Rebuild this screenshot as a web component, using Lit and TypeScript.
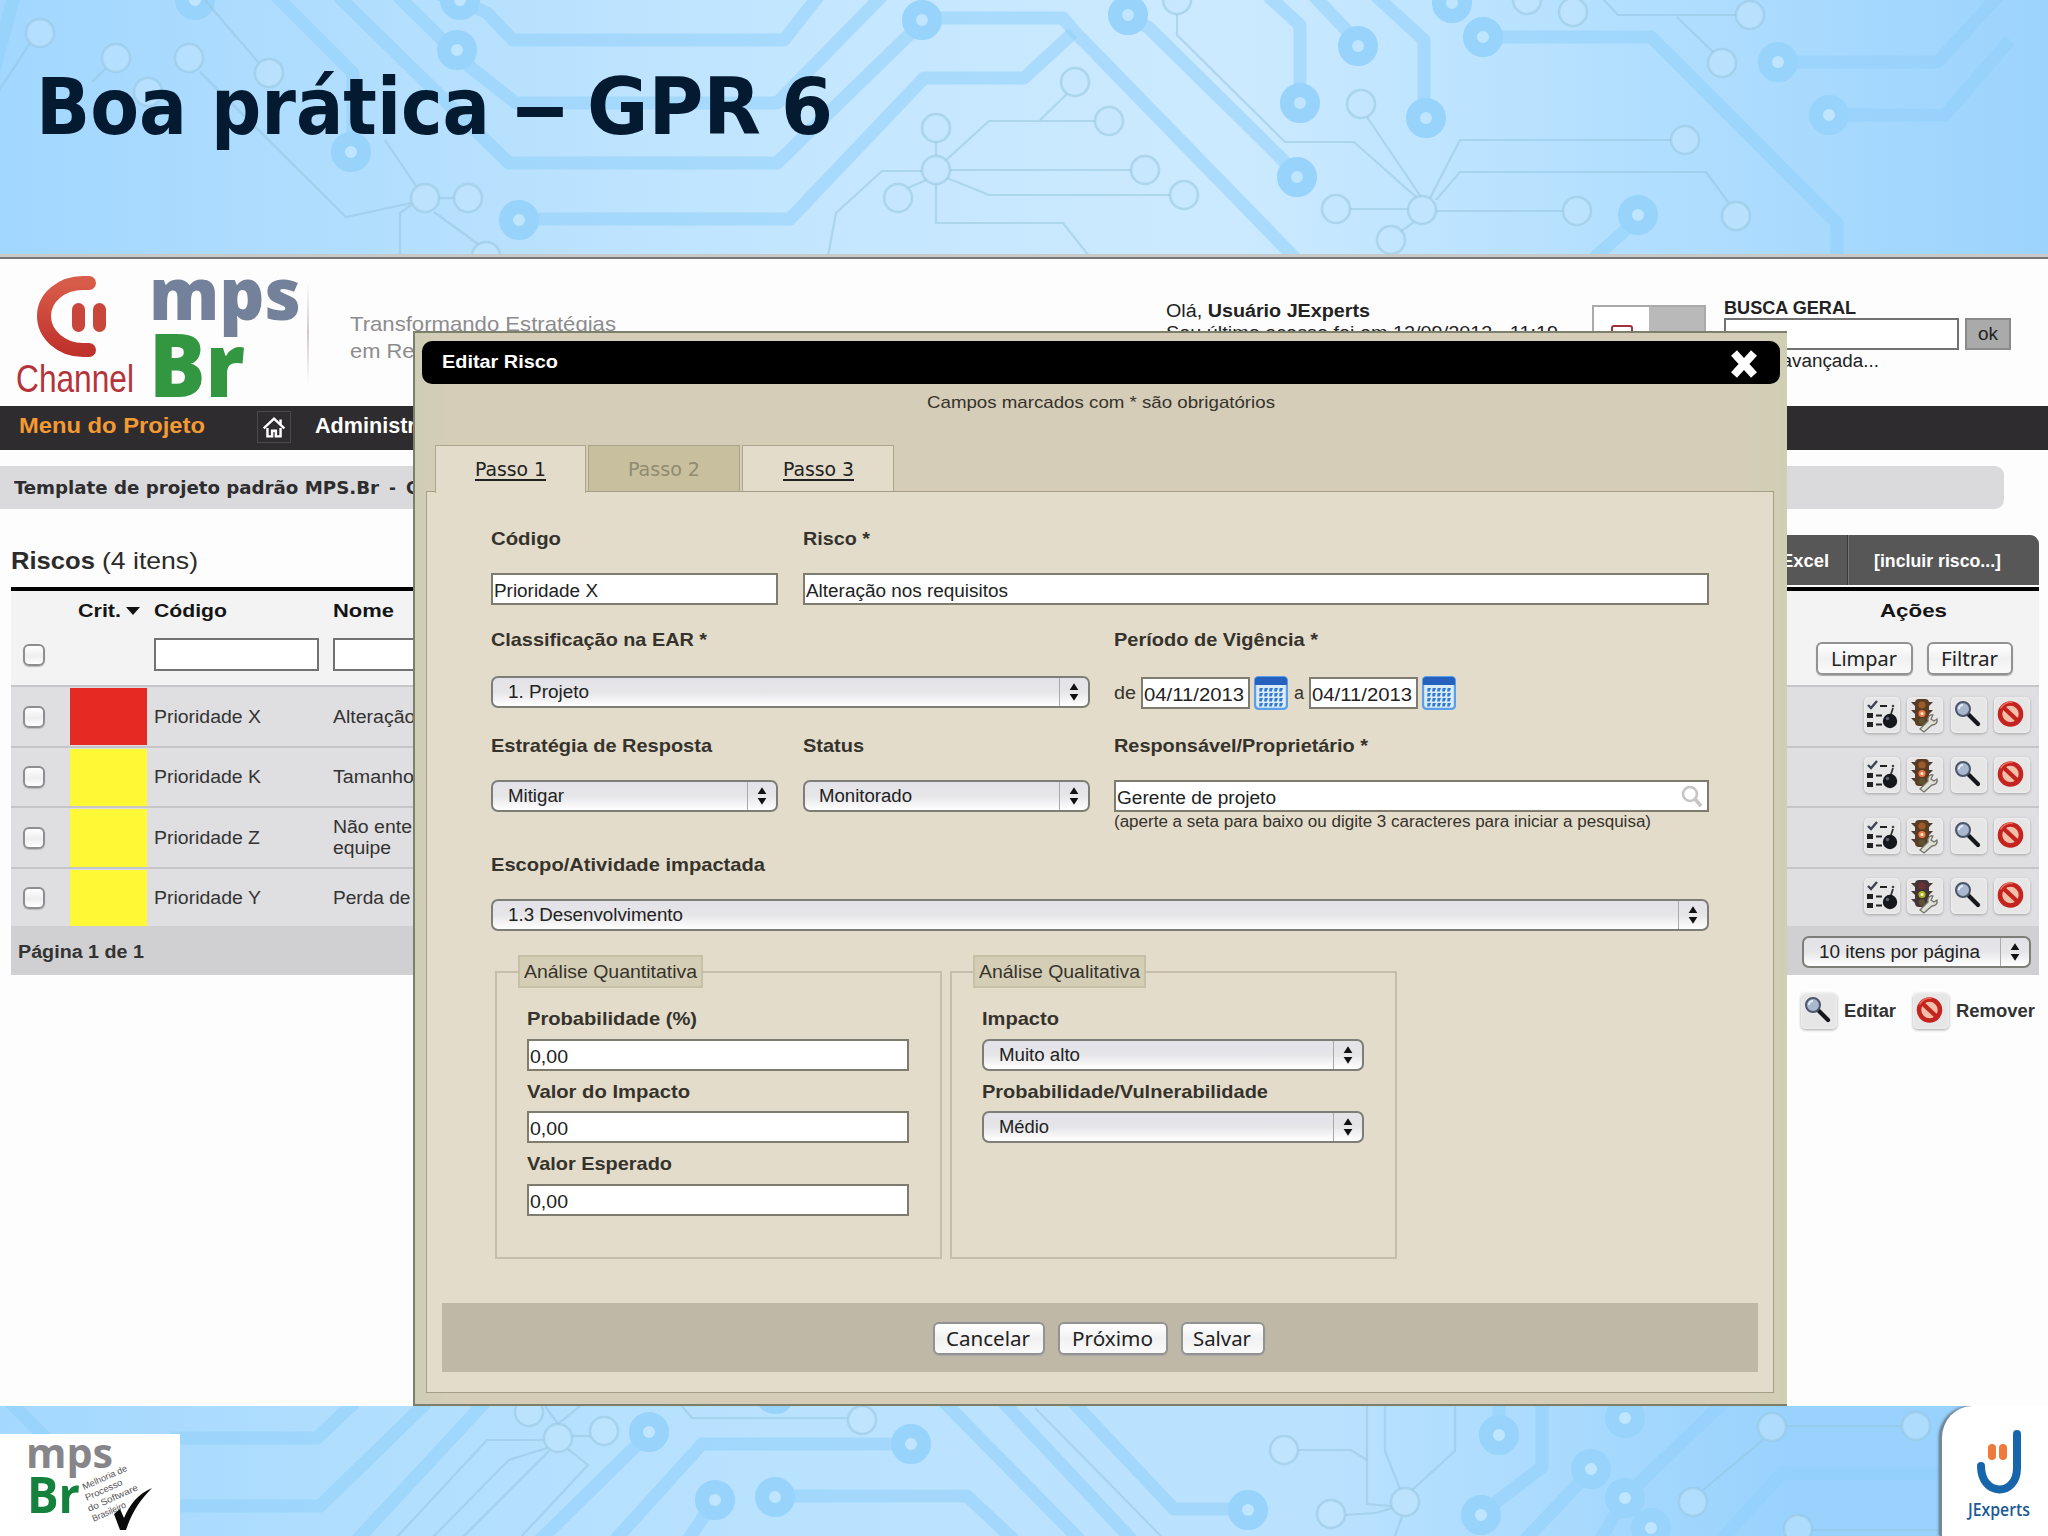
import { LitElement, html, css, svg, nothing } from "lit";
import { customElement } from "lit/decorators.js";

type Pt = [number, number];

// Circuit board decoration: wide traces, wide pads, thin traces, thin pads.
const TOP_WIDE = [
  "M438 -6L460 0L487 13L513 40H784L820 -6", "M398 -4L470 67L516 103H777L882 -4", "M338 -4L509 163H777L911 33",
  "M276 -4L353 73V140", "M934 18H1063L1073 30L1295 258", "M535 219H790L924 78H1024L1073 33", "M-6 70L14 -4",
  "M1140 24L1148 27L1288 165", "M1268 -4L1300 25V92", "M1314 -4L1352 36", "M1376 -4L1424 40V105",
  "M1495 37H1651L1837 223V258", "M1790 62H1938L1998 -4", "M1841 115H1945L2010 40", "M1630 226L1594 258",
];
const TOP_PADS: Pt[] = [[457, 50], [460, 0], [922, 20], [351, 152], [519, 220], [1128, 15], [1297, 177], [1300, 103], [1358, 46], [1426, 118], [1452, 3], [1483, 37], [1778, 62], [1829, 115], [1638, 215], [195, 0]];
const TOP_THIN = [
  "M203 -2L258 62", "M200 72L346 217L411 203", "M385 140L416 186", "M411 205L400 213V256", "M434 212L478 244", "M439 198H454",
  "M936 142V156M926 180L908 188", "M946 160L989 121H1095", "M1067 94L1040 120", "M950 170H1131", "M947 178L989 195H1170",
  "M936 184V223H1063L1089 256", "M922 171H882L836 213L828 256", "M1177 14V35L1285 142H1354L1416 197", "M1367 117L1421 197",
  "M1350 209H1408M1436 211H1563", "M1430 198L1460 140H1671", "M1436 200L1460 172H1706L1729 203", "M1414 222L1400 232",
  "M1736 15H1618L1602 -2", "M1677 17L1713 52", "M106 68L92 82M30 43L-2 92",
];
const TOP_RINGS: Pt[] = [[40, 33], [116, 58], [189, 58], [269, 73], [425, 198], [468, 198], [486, 256], [936, 128], [936, 170], [898, 198], [1109, 121], [1075, 82], [1145, 170], [1184, 195], [1177, 0], [1361, 104], [1422, 210], [1336, 209], [1577, 211], [1685, 140], [1736, 216], [1391, 240], [1750, 15], [1722, 63], [1527, 0], [1573, 12], [148, 92]];
const BOT_WIDE = [
  "M10 -4L48 34", "M170 32H317L355 -4", "M170 100H320L427 -4", "M485 -4L357 134", "M640 36L540 134", "M899 38H702L615 134",
  "M708 104L688 134", "M787 90H967L1014 134", "M944 -4L1080 134", "M1003 -4L1132 134", "M1073 -4L1174 103H1236", "M1499 -4V18",
  "M1542 -4V61L1490 101", "M1583 73L1525 134", "M1724 -4L1634 82", "M1940 67H1782L1721 134", "M1619 102L1600 134",
];
const BOT_PADS: Pt[] = [[649, 26], [911, 38], [715, 94], [775, 91], [1248, 104], [1499, 29], [1481, 109], [1591, 63], [1625, 12], [1625, 92], [1651, 122], [775, -12]];
const BOT_THIN = [
  "M543 34H487L396 132", "M547 42L509 54L432 132", "M549 45L462 132", "M568 43L588 59L520 132", "M572 30H590", "M680 -2L692 12H848",
  "M1035 2L1163 132", "M1298 44H1351L1367 54V98L1391 100", "M1367 -2V54", "M1385 -2V45L1400 83", "M1455 -2V45L1412 84", "M1345 109L1376 107L1392 102",
  "M1402 111L1394 132", "M1786 20H1902", "M1764 33L1703 84", "M1812 124H1938", "M545 0L558 18L580 0",
];
const BOT_RINGS: Pt[] = [[558, 32], [604, 25], [529, 6], [862, 14], [1284, 44], [1405, 96], [1331, 108], [1772, 21], [1916, 20], [1693, 96], [1798, 123]];

const circuit = (w: string[], p: Pt[], t: string[], r: Pt[], h: number) => html`
  <svg class="circuit" width="2048" height=${h} viewBox="0 0 2048 ${h}">
    <g fill="none" stroke="#8fd0fa" stroke-opacity=".55" stroke-width="13" stroke-linejoin="round">${w.map((d) => svg`<path d=${d} />`)}</g>
    ${p.map(([x, y]) => svg`<circle cx=${x} cy=${y} r="13" fill="#bfe5ff" stroke="#98d3fb" stroke-width="14" />`)}
    <g fill="none" stroke="#93c3dc" stroke-opacity=".5" stroke-width="2.2">${t.map((d) => svg`<path d=${d} />`)}</g>
    ${r.map(([x, y]) => svg`<circle cx=${x} cy=${y} r="14" fill="#c3e6fd" fill-opacity=".5" stroke="#98c6de" stroke-opacity=".55" stroke-width="2.6" />`)}
  </svg>`;

const ICONS = {
  tasks: html`<svg class="ic" viewBox="0 0 36 36">
    <path d="M4 8l3 3 6-7" fill="none" stroke="#3d4450" stroke-width="2.4" />
    <path d="M3 16h6v5H3zM3 25h6v5H3z" fill="#222" /><path d="M16 9h7M12 18.5h6M12 27.500h6" stroke="#222" stroke-width="2" />
    <path d="M27 17l2-6" stroke="#333" stroke-width="1.800" /><circle cx="29" cy="9" r="1.300" fill="#444" />
    <circle cx="26" cy="24" r="7.200" fill="#15171b" /><circle cx="23.500" cy="21.500" r="1.800" fill="#59606c" /></svg>`,
  light: (amber: boolean) => html`<svg class="ic" viewBox="0 0 36 36">
    <path d="M4 5h5v5zM4 13h5v5zM4 21h5v5zM26 5h-5v5zM26 13h-5v5z" fill="#4a3a30" />
    <rect x="8" y="2" width="14" height="27" rx="4" fill=${amber ? "#5a3c22" : "#43333a"} />
    <circle cx="15" cy="8" r="3.600" fill=${amber ? "#9a5c2c" : "#6d2f36"} />
    <circle cx="15" cy="16.500" r="3.600" fill=${amber ? "#f0784c" : "#a6b41c"} /><circle cx="15" cy="16.500" r="1.500" fill="#fff2c4" />
    <circle cx="15" cy="24.500" r="3.200" fill="#5c5430" />
    <path d="M13 32l8-8c-1-4 2-7 5-6l-2 4 3 2 3-2c1 4-2 6-5 6l-8 7z" fill="#dfe0d6" stroke="#73736a" stroke-width="1.300" /></svg>`,
  lens: html`<svg class="ic" viewBox="0 0 36 36">
    <path d="M17 17l10 10" stroke="#15171c" stroke-width="4.200" stroke-linecap="round" />
    <circle cx="12" cy="12" r="7" fill="#a9b7cf" stroke="#4c566a" stroke-width="2" /><path d="M8 12a4 4 0 0 1 4-4" fill="none" stroke="#e6edf8" stroke-width="2" /></svg>`,
  deny: html`<svg class="ic" viewBox="0 0 36 36">
    <circle cx="16.500" cy="17" r="10.500" fill="#f0c0a8" stroke="#c4231f" stroke-width="4.600" /><path d="M9.500 10.500l14 13" stroke="#c4231f" stroke-width="4.400" />
    <path d="M6.500 11.500a11 11 0 0 1 12-6" fill="none" stroke="#ea6a5c" stroke-width="1.600" /></svg>`,
};

const calendar = html`<svg class="cal" width="34" height="34" viewBox="0 0 34 34">
  <rect x="1" y="1" width="32" height="32" rx="4" fill="#d9ecfc" stroke="#5c9fe8" stroke-width="2.4" />
  <path d="M1 9V4a3 3 0 0 1 3-3h26a3 3 0 0 1 3 3v5z" fill="#2561bd" />
  ${[12, 17, 22, 27].map((y) => [5, 10, 15, 20, 25].map((x) => svg`<path d="M${x + 0.6} ${y}h3.400l-1.300 3.400h-2.600z" fill="#3478d0" />`))}</svg>`;

const t = (text: string, w: number, cls = "") => html`<span class="t ${cls}" data-w=${w}>${text}</span>`;

const ROWS = [
  { code: "Prioridade X", w: 107, name: ["Alteração nos requisitos"], nw: [208], red: true, h: 61 },
  { code: "Prioridade K", w: 107, name: ["Tamanho do projeto"], nw: [174], h: 60 },
  { code: "Prioridade Z", w: 106, name: ["Não entendimento da", "equipe"], nw: [186, 58], h: 61 },
  { code: "Prioridade Y", w: 107, name: ["Perda de recursos"], nw: [156], last: true, h: 59 },
];

@customElement("app-root")
export class AppRoot extends LitElement {
  static styles = css`
    :host { display: block; position: relative; width: 2048px; height: 1536px; overflow: hidden; background: #fdfdfd; color: #2b2b2b; font: 18px/24px "Liberation Sans", Arial, sans-serif; }
    * { box-sizing: border-box; }
    .t { display: inline-block; white-space: pre; transform-origin: 0 50%; flex: none; }
    .b, b { font-weight: 700; }
    svg { display: block; flex: none; }
    .banner { position: relative; height: 259px; background: linear-gradient(90deg, #a2d7ff, #b4dffe 20%, #c3e6ff 38%, #cceaff 60%, #b4e0ff 78%, #9cd3fd); border-bottom: 2px solid #77777a; padding: 67px 0 0 36px; overflow: hidden; }
    .circuit { position: absolute; left: 0; top: 0; }
    .banner::after { content: ""; position: absolute; left: 0; right: 0; bottom: 0; height: 3px; background: #c9c9c7; }
    .title { position: relative; margin: 0; font: 700 79px/80px "DejaVu Sans Condensed", "DejaVu Sans", sans-serif; font-stretch: condensed; color: #041a30; display: grid; grid-template-columns: 175px 300px 76px 194px 60px; justify-items: start; }
    .head { height: 147px; display: flex; }
    .brand { width: 140px; padding: 13px 0 0 14px; }
    .channel { font: 39px/40px "Liberation Sans", sans-serif; color: #b5343a; margin-top: -5px; margin-left: 2px; }
    .mps { width: 167px; padding-left: 9px; font-family: "Open Sans", sans-serif; font-weight: 800; }
    .mps .m { display: block; font-size: 73px; line-height: 80px; color: #74819a; margin-top: -7px; }
    .mps .r { display: block; font-size: 88px; line-height: 80px; color: #339640; margin-top: -9px; }
    .rule { width: 2px; height: 106px; margin-top: 21px; background: linear-gradient(#fff, #d4c8cc, #fff); }
    .tag { width: 817px; padding: 51px 0 0 41px; font-size: 21px; line-height: 27px; color: #8c8c8e; }
    .tag .t { display: block; width: max-content; }
    .user { width: 466px; padding: 41px 0 0 40px; line-height: 22px; color: #222; }
    .user .t { display: block; width: max-content; }
    .cards { width: 114px; height: 60px; margin: 46px 1px 0 0; border: 2px solid #aaa; display: flex; }
    .cards i { flex: 1; background: #fff; }
    .cards i + i { background: #b9b9b9; }
    .pdf { width: 22px; height: 18px; margin: 18px auto; border: 2px solid #a03038; border-radius: 3px; }
    .search { padding: 37px 0 0 17px; color: #222; }
    .search .line { display: flex; gap: 6px; height: 32px; margin: -2px 0 -1px; }
    .box { border: 2px solid #727272; background: #fff; }
    .ok { width: 46px; background: #aaa; border: 2px solid #8a8a8a; text-align: center; line-height: 28px; }
    .nav { height: 44px; background: #2e2c2e; display: flex; align-items: center; color: #fff; font: 700 22px/38px "Liberation Sans", sans-serif; padding: 0 0 5px 19px; }
    .nav .o { color: #f49a33; width: 238px; }
    .home { width: 34px; height: 32px; border: 1px solid #4b494b; margin-right: 24px; margin-top: 3px; }
    .crumb { margin-top: 16px; height: 43px; width: 2004px; background: #dad9db; border-radius: 0 9px 9px 0; padding-left: 14px; font: 700 18.500px/44px "DejaVu Sans Condensed", "DejaVu Sans", sans-serif; font-stretch: condensed; color: #2d2d2f; display: flex; gap: 10px; }
    .bar { margin: 26px 9px 0 11px; height: 52px; display: flex; align-items: flex-start; font-size: 24px; line-height: 51px; }
    .bar .grow { flex: 1; }
    .tools { width: 339px; height: 50px; background: #575757; border-radius: 0 9px 0 0; color: #fff; display: flex; font: 700 18px/52px "Liberation Sans", sans-serif; }
    .tools .x { width: 148px; text-align: right; padding-right: 18px; border-right: 1px solid #3a3a3a; }
    .tools .y { padding-left: 25px; border-left: 1px solid #747474; }
    .table { margin: 0 9px 0 11px; border-top: 4px solid #000; }
    .grid { display: grid; grid-template-columns: 59px 77px 186px 1fr 279px; }
    .hd { height: 94px; background: #f3f3f4; color: #151515; font-weight: 700; font-size: 19px; grid-template-rows: 47px 1fr; }
    .hd > * { padding-top: 8px; }
    .hd .f { padding-top: 0; }
    .cb { width: 22px; height: 22px; margin-left: 12px; border: 2px solid #8e8e90; border-radius: 6px; background: linear-gradient(#fff, #eee 55%, #fff); box-shadow: 0 1px 1px #bbb; }
    .p7 { padding-left: 7px; } .p8 { padding-left: 8px; }
    .crit { display: flex; gap: 5px; align-items: center; height: 24px; }
    .row { border-top: 2px solid #c6c5c7; background: #dfdee0; align-items: center; color: #333; line-height: 21px; }
    .row .c { align-self: stretch; margin-top: 1px; background: #fff935; }
    .row .c.red { background: #e42a22; margin-bottom: 1px; }
    .row .p7, .row .n { padding-top: 1px; }
    .row .n .t { display: block; width: max-content; }
    .acts { display: flex; gap: 7.500px; justify-content: flex-end; padding: 0 9px 4px 0; }
    .ic { width: 36px; height: 36px; border-radius: 5px; background: #e6e6e6; box-shadow: 0 1px 3px #a4a4a4, inset 0 0 2px #fff; }
    .foot { height: 49px; background: #d0cfd1; display: flex; justify-content: space-between; align-items: center; padding: 2px 8px 0 7px; font-weight: 700; color: #333; }
    .legend { display: flex; align-items: center; justify-content: flex-end; margin: 18px 13px 0 0; color: #333; font-weight: 700; }
    .legend .ic { margin: 0 7px 0 17px; }
    .btn { height: 33px; border: 2px solid #929292; border-radius: 6px; background: linear-gradient(#fff, #f1f1f1 50%, #fafafa); color: #222; text-align: center; font: 19px/31px "Noto Sans", sans-serif; box-shadow: 0 1px 1px #aaa; }
    .btn .t { position: relative; left: -1px; }
    .sel { height: 32px; border: 2px solid #7e7e78; border-radius: 7px; background: linear-gradient(#e2e2e8, #e6e6e9 50%, #fff); display: flex; align-items: center; padding-left: 14.500px; color: #222; font-weight: 400; }
    .sel svg { margin-left: auto; border-left: 1px solid #aaa; }
    .modal { position: absolute; left: 413px; top: 331px; width: 1374px; height: 1075px; background: linear-gradient(90deg, #cfcdb6, #d5cdb8 3%, #d5cdb8 97%, #cfcfb4); border: 2px solid #7c7f6c; border-right: 0; color: #35332b; }
    .mt { margin: 8px 7px 0; height: 43px; background: #000; border-radius: 10px; color: #fff; font-weight: 700; display: flex; align-items: center; justify-content: space-between; padding: 0 20px 2px; }
    .mt svg { position: relative; top: 2px; left: 1px; }
    .req { padding-top: 7px; height: 33px; font-size: 17px; text-align: center; width: 1372px; }
    .tabs { display: flex; margin: 28px 0 0 20px; gap: 2px; height: 46px; position: relative; }
    .tab { width: 152px; height: 46px; border: 1px solid #aca58c; border-bottom: 0; background: #e4dccb; text-align: center; font: 20px/46px "DejaVu Sans Condensed", "DejaVu Sans", sans-serif; font-stretch: condensed; color: #222; }
    .tab .t { text-decoration: underline; text-decoration-thickness: 2px; text-underline-offset: 3px; }
    .tab.on { height: 48px; width: 151px; }
    .tab.off { background: #c7bf9d; color: #918b72; }
    .tab.off .t { text-decoration: none; }
    .panel { margin-left: 11px; width: 1348px; height: 902px; border: 1px solid #a59e86; background: #e4dccb; padding-left: 64px; }
    .row-f { display: grid; grid-template-columns: 287px 287px 595px; column-gap: 24.500px; }
    .s2 { grid-column: span 2; } .s3 { grid-column: span 3; }
    .lb { display: block; height: 24px; font-weight: 700; font-size: 18.500px; }
    .in { height: 32px; border: 2px solid #7d7c6f; background: #fff; padding-left: 1px; line-height: 32px; color: #222; display: flex; justify-content: space-between; }
    .a { padding-top: 35px; } .a .lb { margin-bottom: 22px; }
    .bb { padding-top: 23px; } .bb .lb { margin-bottom: 24px; }
    .cc { padding-top: 24px; } .cc .lb { margin-bottom: 22px; }
    .dd { padding-top: 21px; } .dd .lb { margin-bottom: 22px; }
    .hint { font-size: 16px; line-height: 16px; height: 20px; padding-top: 2px; }
    .dates { display: flex; align-items: center; height: 34px; }
    .dates .in { width: 109px; margin: 0 4px 0 5px; }
    .dates .cal { margin-right: 6px; }
    .sets { display: flex; gap: 8px; margin: 24px 0 0 4px; }
    fieldset { margin: 0; width: 447px; height: 304px; border: 2px solid #c6beaa; padding: 10px 31px 0 30px; min-inline-size: 0; }
    legend { margin-left: -9px; height: 33px; padding: 0 4px; border: 2px solid #c6c0a6; background: #d5ceb6; font-size: 18.500px; line-height: 29px; }
    fieldset .lb { margin: 9px 0 7.600px; line-height: 24px; }
    .cmd { margin: 44px 0 0 -49px; width: 1316px; height: 69px; background: #c0b8a7; display: flex; justify-content: center; align-items: flex-start; gap: 13px; padding: 19px 2px 0 0; }
    .bottom { position: absolute; left: 0; top: 1406px; width: 2048px; height: 130px; background: linear-gradient(90deg, #a4d8ff, #b2dffe 20%, #bbe3ff 45%, #bae2ff 65%, #98d2fd 88%); overflow: hidden; display: flex; justify-content: space-between; }
    .seal { position: relative; width: 180px; height: 102px; margin-top: 28px; background: #fff; }
    .seal svg { overflow: visible; }
    .jx { position: relative; width: 108px; height: 130px; background: #fff; border-left: 2px solid #789; border-radius: 32px 0 0 0; box-shadow: -1px 0 3px #567; }
  `;

  protected firstUpdated() {
    const fits = [...this.renderRoot.querySelectorAll<HTMLElement>("[data-w]")];
    const sizes = fits.map((el) => el.getBoundingClientRect().width);
    fits.forEach((el, i) => {
      const want = Number(el.dataset.w);
      el.style.transform = `scaleX(${(want / sizes[i]).toFixed(4)})`;
      el.style.marginRight = `${(want - sizes[i]).toFixed(2)}px`;
    });
  }

  private select(text: string, w: number) {
    return html`<div class="sel">${t(text, w)}
      <svg width="29" height="28" viewBox="0 0 29 28"><path d="M10 12l4.500-7 4.500 7zM10 16l4.500 7 4.500-7z" fill="#111" /></svg></div>`;
  }

  private page() {
    return html`
      <div class="head">
        <div class="brand">
          <svg width="110" height="92" viewBox="0 0 110 92">
            <defs><linearGradient id="rd" x1="0" y1="0" x2="0" y2="1"><stop offset="0" stop-color="#d85c4a" /><stop offset="1" stop-color="#c0322c" /></linearGradient></defs>
            <path d="M75 11H69C47 11 30 26 30 44S47 78 69 78H75" fill="none" stroke="url(#rd)" stroke-width="14" stroke-linecap="round" />
            <rect x="58" y="31" width="13" height="29" rx="6.500" fill="#c9473a" /><rect x="79" y="31" width="13" height="29" rx="6.500" fill="#c9473a" />
          </svg>
          <div class="channel">${t("Channel", 118)}</div>
        </div>
        <div class="mps"><div class="m">${t("mps", 152)}</div><div class="r">${t("Br", 96)}</div></div>
        <div class="rule"></div>
        <div class="tag">${t("Transformando Estratégias", 266)}${t("em Resultados", 146)}</div>
        <div class="user"><div>${html`<span class="t" data-w="204">Olá, <b>Usuário JExperts</b></span>`}</div>${t("Seu último acesso foi em 12/09/2013 - 11:19", 392)}</div>
        <div class="cards"><i><div class="pdf"></div></i><i></i></div>
        <div class="search">${t("BUSCA GERAL", 132, "b")}
          <div class="line"><div class="box" style="width:235px"></div><div class="ok">${t("ok", 20)}</div></div>
          ${t("Busca avançada...", 155)}</div>
      </div>
      <div class="nav"><div class="o">${t("Menu do Projeto", 186)}</div>
        <svg class="home" viewBox="0 0 34 32"><path d="M6 17.500L17 7l11 10.500M10 17v9h5v-6h4v6h5v-9M24 13V8" fill="none" stroke="#fff" stroke-width="2.600" /></svg>
        ${t("Administração", 150)}</div>
      <div class="crumb">${t("Template de projeto padrão MPS.Br", 365)}<span>-</span><span>Gerenciamento</span></div>
      <div class="bar"><div class="grow">${t("Riscos", 84, "b")}<span class="t"> </span>${t("(4 itens)", 96)}</div>
        <div class="tools"><div class="x">${t("Excel", 48)}</div><div class="y">${t("[incluir risco...]", 127)}</div></div></div>
      <div class="table">
        <div class="grid hd">
          <div></div><div class="p8"><div class="crit">${t("Crit.", 43)}<svg width="14" height="9"><path d="M0 0h14l-7 8z" fill="#111" /></svg></div></div>
          <div class="p7">${t("Código", 73)}</div><div>${t("Nome", 61)}</div>
          <div style="padding-left:120px">${t("Ações", 67)}</div>
          <div class="f" style="padding-top:6px"><div class="cb"></div></div><div></div>
          <div class="f p7"><div class="box" style="width:165px;height:33px"></div></div>
          <div class="f"><div class="box" style="width:165px;height:33px"></div></div>
          <div class="f" style="display:flex;gap:14px;padding:4px 0 0 56px">
            <div class="btn" style="width:97px">${t("Limpar", 66)}</div><div class="btn" style="width:86px">${t("Filtrar", 57)}</div></div>
        </div>
        ${ROWS.map((r) => html`<div class="grid row" style="height:${r.h}px">
          <div class="cb"></div><div class="c ${r.red ? "red" : ""}"></div><div class="p7">${t(r.code, r.w)}</div>
          <div class="n">${r.name.map((s, i) => t(s, r.nw[i]))}</div>
          <div class="acts">${ICONS.tasks}${ICONS.light(!r.last)}${ICONS.lens}${ICONS.deny}</div></div>`)}
        <div class="foot">${t("Página 1 de 1", 126)}<div style="width:229px">${this.select("10 itens por página", 161)}</div></div>
      </div>
      <div class="legend">${ICONS.lens}${t("Editar", 52)}${ICONS.deny}${t("Remover", 79)}</div>`;
  }

  private field(label: string, w: number, body: unknown, cls = "") {
    return html`<div class=${cls}><span class="lb">${t(label, w)}</span>${body}</div>`;
  }

  private input(text: string, w: number, extra: unknown = nothing) {
    return html`<div class="in">${t(text, w)}${extra}</div>`;
  }

  private modal() {
    return html`<div class="modal">
      <div class="mt">${t("Editar Risco", 116)}
        <svg width="34" height="32" viewBox="0 0 34 32"><path d="M7 5l20 22M27 5L7 27" stroke="#fff" stroke-width="8" /></svg></div>
      <div class="req">${t("Campos marcados com * são obrigatórios", 348)}</div>
      <div class="tabs"><div class="tab on">${t("Passo 1", 71)}</div><div class="tab off">${t("Passo 2", 72)}</div><div class="tab">${t("Passo 3", 71)}</div></div>
      <div class="panel">
        <div class="row-f a">
          ${this.field("Código", 70, this.input("Prioridade X", 104))}
          ${this.field("Risco *", 67, this.input("Alteração nos requisitos", 202), "s2")}
        </div>
        <div class="row-f bb">
          ${this.field("Classificação na EAR *", 216, this.select("1. Projeto", 81), "s2")}
          ${this.field("Período de Vigência *", 204, html`<div class="dates">${t("de", 22)}${this.input("04/11/2013", 100)}${calendar}${t("a", 10)}${this.input("04/11/2013", 100)}${calendar}</div>`)}
        </div>
        <div class="row-f cc">
          ${this.field("Estratégia de Resposta", 221, this.select("Mitigar", 56))}
          ${this.field("Status", 61, this.select("Monitorado", 93))}
          ${this.field("Responsável/Proprietário *", 254, html`${this.input("Gerente de projeto", 159, html`<svg width="30" height="28" viewBox="0 0 30 28"><circle cx="13" cy="12" r="7" fill="none" stroke="#c6c4c4" stroke-width="2.600" /><path d="M18 17l6 7" stroke="#c6c4c4" stroke-width="3.500" /></svg>`)}
            <div class="hint">${t("(aperte a seta para baixo ou digite 3 caracteres para iniciar a pesquisa)", 537)}</div>`)}
        </div>
        <div class="row-f dd">${this.field("Escopo/Atividade impactada", 274, this.select("1.3 Desenvolvimento", 175), "s3")}</div>
        <div class="sets">
          <fieldset><legend>${t("Análise Quantitativa", 173)}</legend>
            ${this.field("Probabilidade (%)", 170, this.input("0,00", 38))}
            ${this.field("Valor do Impacto", 163, this.input("0,00", 38))}
            ${this.field("Valor Esperado", 145, this.input("0,00", 38))}
          </fieldset>
          <fieldset><legend>${t("Análise Qualitativa", 161)}</legend>
            ${this.field("Impacto", 77, this.select("Muito alto", 81))}
            ${this.field("Probabilidade/Vulnerabilidade", 286, this.select("Médio", 50))}
          </fieldset>
        </div>
        <div class="cmd"><div class="btn" style="width:112px">${t("Cancelar", 84)}</div><div class="btn" style="width:110px">${t("Próximo", 81)}</div><div class="btn" style="width:84px">${t("Salvar", 58)}</div></div>
      </div>
    </div>`;
  }

  private bottom() {
    return html`<div class="bottom">${circuit(BOT_WIDE, BOT_PADS, BOT_THIN, BOT_RINGS, 130)}
      <div class="seal"><svg width="180" height="102" viewBox="0 0 180 102">
        <g font-family="Open Sans, sans-serif" font-weight="700">
          <text x="26" y="34" font-size="42" fill="#86868a" textLength="87" lengthAdjust="spacingAndGlyphs">mps</text>
          <text x="27" y="79" font-size="51" fill="#14813c" textLength="53" lengthAdjust="spacingAndGlyphs">Br</text></g>
        <g font-family="Liberation Sans, sans-serif" font-size="9" fill="#555" transform="rotate(-24 84 56)">
          <text x="84" y="56" textLength="48" lengthAdjust="spacingAndGlyphs">Melhoria de</text><text x="82" y="67" textLength="40" lengthAdjust="spacingAndGlyphs">Processo</text>
          <text x="80" y="78" textLength="54" lengthAdjust="spacingAndGlyphs">do Software</text><text x="80" y="89" textLength="36" lengthAdjust="spacingAndGlyphs">Brasileiro</text></g>
        <path d="M114 80l6-5 4 9c6-14 14-24 28-30-12 12-20 24-26 42h-6z" fill="#0a0a0a" />
      </svg></div>
      <div class="jx"><svg width="106" height="130" viewBox="0 0 106 130">
        <path d="M75 28V62C75 91 39 91 39 60" fill="none" stroke="#1766ab" stroke-width="8" stroke-linecap="round" />
        <rect x="46" y="38" width="8" height="16" rx="4" fill="#ee7a3c" /><rect x="57" y="38" width="8" height="16" rx="4" fill="#ee7a3c" />
        <text x="26" y="110" font-family="Open Sans, sans-serif" font-weight="600" font-size="18" fill="#1b5a96" textLength="62" lengthAdjust="spacingAndGlyphs">JExperts</text></svg></div>
    </div>`;
  }

  render() {
    return html`
      <div class="banner">${circuit(TOP_WIDE, TOP_PADS, TOP_THIN, TOP_RINGS, 259)}
        <h1 class="title">${t("Boa", 151)}${t("prática", 279)}${t("–", 58)}${t("GPR", 174)}${t("6", 52)}</h1></div>
      ${this.page()}${this.modal()}${this.bottom()}`;
  }
}
